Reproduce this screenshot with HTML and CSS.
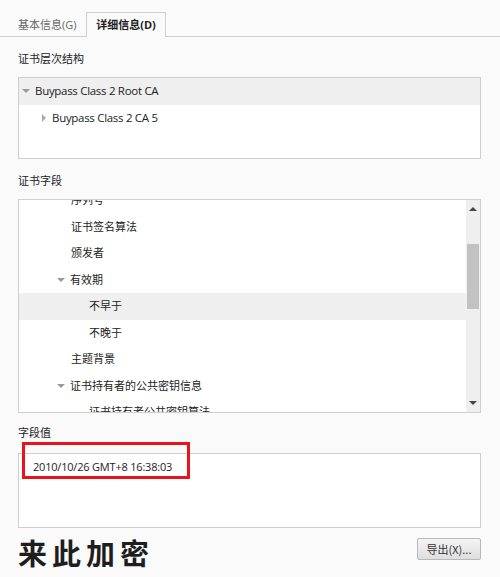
FILE: index.html
```html
<!DOCTYPE html>
<html lang="zh-CN">
<head>
<meta charset="utf-8">
<title>证书详细信息</title>
<link rel="stylesheet" href="styles.css">
</head>
<body>
<div class="tabs">
  <div class="tab">基本信息(G)</div>
  <div class="tab active">详细信息(D)</div>
</div>
<div class="content">
  <div class="label l1">证书层次结构</div>
  <div class="box hier">
    <div class="row sel"><span class="arrow down"></span>Buypass Class 2 Root CA</div>
    <div class="row ind1"><span class="arrow right"></span>Buypass Class 2 CA 5</div>
  </div>

  <div class="label l2">证书字段</div>
  <div class="box fields">
    <div class="list">
      <div class="row f1">序列号</div>
      <div class="row f1">证书签名算法</div>
      <div class="row f1">颁发者</div>
      <div class="row f0"><span class="arrow down"></span>有效期</div>
      <div class="row f2 sel">不早于</div>
      <div class="row f2">不晚于</div>
      <div class="row f1">主题背景</div>
      <div class="row f0"><span class="arrow down"></span>证书持有者的公共密钥信息</div>
      <div class="row f2">证书持有者公共密钥算法</div>
    </div>
    <div class="scrollbar">
      <span class="sb-up"></span>
      <span class="sb-thumb"></span>
      <span class="sb-down"></span>
    </div>
  </div>

  <div class="label l3">字段值</div>
  <div class="valwrap">
    <div class="box value">2010/10/26 GMT+8 16:38:03</div>
    <div class="mark"></div>
  </div>

  <div class="bottom">
    <div class="watermark">来此加密</div>
    <button class="btn">导出(X)...</button>
  </div>
</div>
</body>
</html>
```

FILE: styles.css
```css
html, body {
  margin: 0;
  padding: 0;
}
body {
  width: 500px;
  height: 577px;
  overflow: hidden;
  background: #fafafa;
  font-family: "Open Sans", "Noto Sans CJK SC", sans-serif;
  font-size: 11px;
  color: #222;
}
.tabs {
  display: flex;
  align-items: flex-end;
  height: 36px;
  border-bottom: 1px solid #cfcfcf;
  padding-left: 12px;
}
.tab {
  height: 23px;
  line-height: 23px;
  padding: 0 6px;
  color: #666;
  width: 62px;
  white-space: nowrap;
  box-sizing: content-box;
}
.tab.active {
  width: 78px;
  padding: 0;
  text-align: center;
  font-weight: bold;
  color: #222;
  border: 1px solid #cfcfcf;
  border-bottom: none;
  background: #fafafa;
  height: 23px;
  margin-bottom: -1px;
  padding-bottom: 1px;
}
.content {
  padding: 0 19px 0 18px;
}
.label {
  height: 18px;
  line-height: 18px;
  color: #222;
}
.l1 { margin-top: 13px; }
.l2 { margin-top: 13px; }
.l3 { margin-top: 11px; }
.box {
  border: 1px solid #cfcfcf;
  background: #fff;
  box-sizing: border-box;
}
.hier {
  margin-top: 9px;
  height: 82px;
}
.row {
  height: 26.5px;
  line-height: 26.5px;
  white-space: nowrap;
  display: flex;
  align-items: center;
}
.row.sel { background: #efefef; }
.hier .row { padding-left: 2px; font-size: 11.5px; letter-spacing: -0.3px; }
.hier .row.ind1 { padding-left: 21px; }
.arrow {
  display: inline-block;
  width: 0;
  height: 0;
  margin-right: 6px;
}
.arrow.down {
  border-left: 4px solid transparent;
  border-right: 4px solid transparent;
  border-top: 4px solid #999;
  margin-left: 1px;
  margin-right: 5px;
}
.arrow.right {
  border-top: 4px solid transparent;
  border-bottom: 4px solid transparent;
  border-left: 4px solid #aaa;
  margin-left: 2px;
  margin-right: 6px;
}
.fields {
  margin-top: 9px;
  height: 214px;
  position: relative;
  overflow: hidden;
  display: flex;
}
.list {
  flex: 1;
  margin-top: -13px;
}
.fields .row.f0 { padding-left: 37px; }
.fields .row.f1 { padding-left: 52px; }
.fields .row.f2 { padding-left: 70px; }
.scrollbar {
  width: 14px;
  background: #efefef;
  display: flex;
  flex-direction: column;
  align-items: center;
}
.sb-up {
  width: 0; height: 0;
  margin-top: 7px;
  border-left: 4px solid transparent;
  border-right: 4px solid transparent;
  border-bottom: 4px solid #444;
}
.sb-thumb {
  width: 12px;
  height: 65px;
  margin-top: 33px;
  background: #c2c2c2;
}
.sb-down {
  width: 0; height: 0;
  margin-top: auto;
  margin-bottom: 7px;
  border-left: 4px solid transparent;
  border-right: 4px solid transparent;
  border-top: 4px solid #444;
}
.valwrap {
  position: relative;
  margin-top: 11px;
}
.value {
  height: 75px;
  padding: 4px 0 0 14px;
  line-height: 18px;
  font-size: 11px;
  letter-spacing: -0.2px;
}
.mark {
  position: absolute;
  left: 4px;
  top: -11px;
  width: 162px;
  height: 31px;
  border: 3px solid #e8141a;
}
.bottom {
  display: flex;
  justify-content: space-between;
  align-items: flex-start;
  margin-top: 8px;
}
.watermark {
  font-family: "Noto Sans CJK SC", sans-serif;
  font-weight: bold;
  font-size: 29px;
  letter-spacing: 5px;
  line-height: 34px;
  color: #1e1e1e;
  margin-top: -1px;
}
.btn {
  margin-top: 2px;
  width: 64px;
  height: 22px;
  border: 1px solid #b8b8b8;
  border-radius: 2px;
  background: linear-gradient(#f4f4f4, #dedede);
  font-family: "Noto Sans CJK SC", sans-serif;
  font-size: 11px;
  color: #333;
  padding: 0;
}
```
